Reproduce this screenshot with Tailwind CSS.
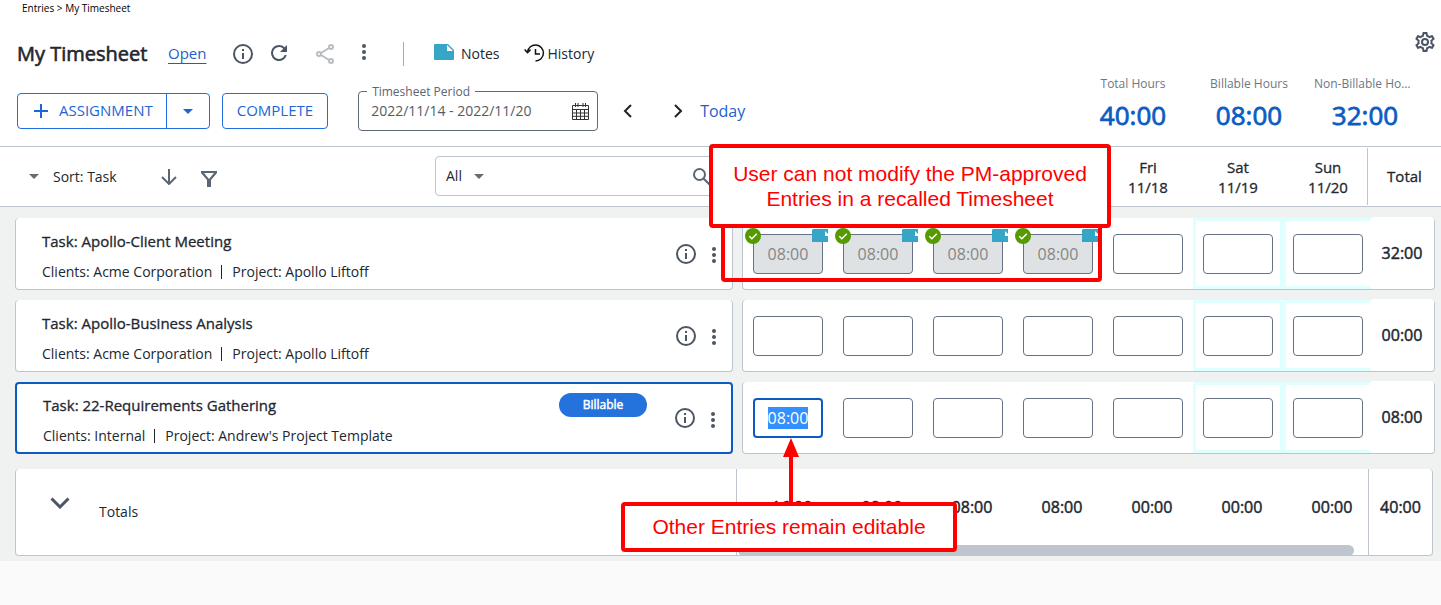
<!DOCTYPE html>
<html lang="en">

<head>
  <meta charset="UTF-8" />
  <meta name="viewport" content="width=device-width, initial-scale=1.0"/>
  <title>My Timesheet</title>
  <script src="https://cdn.jsdelivr.net/npm/@tailwindcss/browser@4"></script>
</head>

<body class="bg-[#fafafa] font-['Open_Sans','Noto_Sans',sans-serif] text-sm text-[#22272f] min-h-screen">

  <!-- Icons -->
  <svg class="hidden">
    <symbol id="i-info" viewBox="0 0 20 20">
      <circle cx="10" cy="10" r="9" fill="none" stroke="currentColor" stroke-width="2"/>
      <path d="M9 5h2v2H9zM9 9h2v6H9z" fill="currentColor"/>
    </symbol>
    <symbol id="i-dots" viewBox="0 0 4 16">
      <g fill="currentColor"><circle cx="2" cy="2" r="2"/><circle cx="2" cy="8" r="2"/><circle cx="2" cy="14" r="2"/></g>
    </symbol>
    <symbol id="i-caret" viewBox="0 0 10 5"><path d="M0 0h10L5 5z" fill="currentColor"/></symbol>
    <symbol id="i-note" viewBox="0 0 20 16"><path d="M1 0h13l6 6v9a1 1 0 0 1-1 1H1a1 1 0 0 1-1-1V1a1 1 0 0 1 1-1z" fill="#37a5c6"/><path d="M13 1v6h6z" fill="#fff"/></symbol>
    <symbol id="i-note-sm" viewBox="0 0 16 13"><path d="M1 0h15v13H0V1z" fill="#37a5c6"/><path d="M13 2l3 3v2h-3z" fill="#fff"/></symbol>
    <symbol id="i-check" viewBox="0 0 16 16"><circle cx="8" cy="8" r="8" fill="#549a00"/><path d="M4.3 8.2l2.5 2.5 5-5" fill="none" stroke="#fff" stroke-width="1.5"/></symbol>
  </svg>

  <div class="relative">
    <header class="bg-white">
      <nav class="pl-[22px] text-[10px] leading-4 text-black">Entries &gt; My Timesheet</nav>
      <div class="flex justify-between">
        <div class="pt-[14px] pl-[17px]">
          <div class="flex items-center h-12">
            <h1 class="w-[151px] text-xl [-webkit-text-stroke:0.03em] whitespace-nowrap">My Timesheet</h1>
            <a href="#" class="w-[65px] text-[15px] text-[#1d5fc9] underline underline-offset-4">Open</a>
            <button aria-label="Info" class="text-[#4b5563]"><svg class="size-5"><use href="#i-info"/></svg></button>
            <button aria-label="Refresh" class="ml-[14px] pb-[2px] text-[#4b5563]">
              <svg class="size-6" viewBox="0 0 24 24" fill="currentColor"><path d="M17.65 6.35A7.96 7.96 0 0 0 12 4a8 8 0 1 0 7.73 10h-2.08A6 6 0 1 1 12 6c1.66 0 3.14.69 4.22 1.78L13 11h7V4z"/></svg>
            </button>
            <button aria-label="Share" class="ml-[25px] text-[#b9bdc3]">
              <svg class="w-[18px] h-5" viewBox="0 0 18 20" fill="none" stroke="currentColor" stroke-width="2"><circle cx="3" cy="10" r="2"/><circle cx="15" cy="3" r="2"/><circle cx="15" cy="17" r="2"/><path d="M5 9l8-5M5 11l8 5"/></svg>
            </button>
            <button aria-label="More" class="ml-7 pb-1 text-[#4b5563]"><svg class="w-1 h-4"><use href="#i-dots"/></svg></button>
            <span class="ml-[37px] mr-[30px] w-px h-6 bg-[#a3abb8]"></span>
            <button class="flex items-center gap-[7px]"><svg class="mb-1 w-5 h-4"><use href="#i-note"/></svg>Notes</button>
            <button class="flex items-center gap-[3px] ml-[24px]">
              <svg class="mb-[2px] w-[21px] h-5" viewBox="0 0 21 20" fill="none" stroke="#111" stroke-width="1.5"><path d="M3.500 9A8 8 0 1 1 11.500 18M11.500 6v5H16"/><path d="M.6 6.600L3.500 9.600l3-3"/></svg>
              History
            </button>
          </div>
          <div class="flex items-center h-10 mt-[13px] mb-[15px]">
            <div class="flex h-9 border border-[#1f6fde] rounded text-[15px] text-[#1d66d6]">
              <button class="flex items-center gap-[10px] pl-[15px] pr-[13px] border-r border-[#1f6fde]">
                <svg class="size-4" viewBox="0 0 16 16" stroke="currentColor" stroke-width="2"><path d="M8 1v14M1 8h14"/></svg>
                ASSIGNMENT
              </button>
              <button aria-label="More assignment options" class="px-4"><svg class="w-[10px] h-[5px]"><use href="#i-caret"/></svg></button>
            </div>
            <button class="h-9 ml-3 px-[14px] border border-[#1f6fde] rounded text-[15px] text-[#1d66d6]">COMPLETE</button>
            <div class="relative flex items-center w-60 h-10 ml-[30px] pl-3 pr-2 border border-[#5f6b7a] rounded">
              <label for="period" class="absolute -top-2 left-2 px-[5px] bg-white text-xs leading-4 text-[#5b6472] whitespace-nowrap">Timesheet Period</label>
              <input id="period" type="text" value="2022/11/14 - 2022/11/20" class="min-w-0 flex-1 text-[#555b66] outline-none" />
              <svg class="w-[17px] h-[17px]" viewBox="0 0 17 17" fill="none" stroke="#333" stroke-width="1"><path d="M.5 2.500h16v14H.5zM.5 6.500h16M.5 10h16M.5 13.300h16M4.500 6.500v10M8.500 6.500v10M12.500 6.500v10"/><path d="M3.500 0v4M6 0v4M11 0v4M13.500 0v4"/></svg>
            </div>
            <button aria-label="Previous period" class="ml-[25px]"><svg class="w-[9px] h-[14px]" viewBox="0 0 9 14" fill="none" stroke="#222" stroke-width="2"><path d="M8 1L2 7l6 6"/></svg></button>
            <button aria-label="Next period" class="ml-[42px]"><svg class="w-[9px] h-[14px]" viewBox="0 0 9 14" fill="none" stroke="#222" stroke-width="2"><path d="M1 1l6 6-6 6"/></svg></button>
            <button class="ml-[17px] text-base text-[#1d5fc9]">Today</button>
          </div>
        </div>

        <div class="flex flex-col items-end pt-4">
          <button aria-label="Settings" class="mr-[6px] text-[#4b5563]">
            <svg class="size-5" viewBox="2 2 20 20" fill="currentColor"><path d="M19.43 12.98c.04-.32.07-.64.07-.98s-.03-.66-.07-.98l2.11-1.65a.5.5 0 0 0 .12-.64l-2-3.46a.5.5 0 0 0-.61-.22l-2.49 1a7.3 7.3 0 0 0-1.69-.98l-.38-2.65A.49.49 0 0 0 14 2h-4a.49.49 0 0 0-.49.42l-.38 2.65c-.61.25-1.17.59-1.69.98l-2.49-1a.5.5 0 0 0-.61.22l-2 3.46a.5.5 0 0 0 .12.64l2.11 1.65a7.9 7.9 0 0 0 0 1.96l-2.11 1.65a.5.5 0 0 0-.12.64l2 3.46c.12.22.38.3.61.22l2.49-1c.52.4 1.08.73 1.69.98l.38 2.65c.03.24.24.42.49.42h4c.25 0 .46-.18.49-.42l.38-2.65a7.3 7.3 0 0 0 1.69-.98l2.49 1c.23.08.49 0 .61-.22l2-3.46a.5.5 0 0 0-.12-.64zm-1.98-1.71a5.3 5.3 0 0 1 0 1.46l-.14 1.13 1.9 1.5-.7 1.21-2.24-.9-.93.71c-.36.27-.72.48-1.09.63l-1.06.43-.34 2.39h-1.7l-.34-2.39-1.06-.43a5 5 0 0 1-1.07-.62l-.95-.72-2.24.9-.7-1.21 1.9-1.5-.14-1.13a5.400 5.400 0 0 1 0-1.46l.14-1.13-1.9-1.5.7-1.21 2.24.9.93-.71c.36-.27.72-.48 1.090-.63l1.060-.43.34-2.390h1.700l.34 2.390 1.060.43c.38.160.73.360 1.070.62l.95.720 2.240-.9.700 1.210-1.900 1.500zM12 8a4 4 0 1 0 0 8 4 4 0 0 0 0-8zm0 6a2 2 0 1 1 0-4 2 2 0 0 1 0 4z"/></svg>
          </button>
          <dl class="grid grid-cols-3 w-[348px] mt-6 mr-[18px] text-center">
            <div class="px-[7px]"><dt class="text-xs leading-4 text-[#6b7785] truncate">Total Hours</dt><dd class="mt-[7px] text-[26px] leading-8 [-webkit-text-stroke:0.03em] text-[#0b5cc2]">40:00</dd></div>
            <div class="px-[7px]"><dt class="text-xs leading-4 text-[#6b7785] truncate">Billable Hours</dt><dd class="mt-[7px] text-[26px] leading-8 [-webkit-text-stroke:0.03em] text-[#0b5cc2]">08:00</dd></div>
            <div class="px-[7px]"><dt class="text-xs leading-4 text-[#6b7785] truncate">Non-Billable Hours</dt><dd class="mt-[7px] text-[26px] leading-8 [-webkit-text-stroke:0.03em] text-[#0b5cc2]">32:00</dd></div>
          </dl>
        </div>
      </div>
    </header>

    <!-- Sort, search and day headings -->
    <div class="flex h-[61px] bg-white border-y border-[#bfc5cf]">
      <div class="flex flex-1 items-center pl-[29px]">
        <button class="flex items-center gap-[14px]"><svg class="w-[10px] h-[5px] text-[#6b6b6b]"><use href="#i-caret"/></svg>Sort: Task</button>
        <button aria-label="Sort direction" class="ml-[44px] text-[#5b6675]"><svg class="size-4" viewBox="0 0 16 16" fill="none" stroke="currentColor" stroke-width="2"><path d="M8 0v15M1 8l7 7 7-7"/></svg></button>
        <button aria-label="Filter" class="ml-6 mt-1 text-[#5b6675]"><svg class="size-4" viewBox="0 0 16 16" fill="currentColor"><path d="M0 0h16v2l-6 7v7H6V9L0 2zM3 2l5 6 5-6z" fill-rule="evenodd"/></svg></button>
        <div class="flex items-center w-[290px] h-10 ml-auto mr-[18px] mb-px px-[10px] border border-[#bfc5cf] rounded">
          <button class="flex items-center gap-[12px]">All<svg class="w-[10px] h-[5px] text-[#6b6b6b]"><use href="#i-caret"/></svg></button>
          <input type="search" aria-label="Search tasks" class="min-w-0 flex-1 px-2 outline-none" />
          <svg class="w-[17px] h-[17px] mr-1 text-[#5b6675]" viewBox="0 0 17 17" fill="none" stroke="currentColor" stroke-width="2"><circle cx="6.500" cy="6.500" r="5.500"/><path d="M10.500 10.500l6 6"/></svg>
        </div>
      </div>
      <div id="day-head" class="grid grid-cols-7 items-center w-[630px] shrink-0 text-center text-[15px] leading-5 [-webkit-text-stroke:0.02em]"></div>
      <div class="relative flex items-center justify-center w-[74px] -ml-[6px] my-px border-l border-[#bfc5cf] text-[15px] [-webkit-text-stroke:0.02em]">Total</div>
    </div>

    <main class="bg-[#f0f2f1] pt-[11px] pb-[5px]">
      <div id="rows" class="flex flex-col gap-[10px] pl-[15px] pr-[6px]"></div>

      <!-- Totals -->
      <div class="relative flex h-[87px] mt-[15px] ml-[15px] mr-2 bg-white border border-t-0 border-[#bfc5cf] rounded">
        <div class="flex flex-1 items-center pl-[34px]">
          <button aria-label="Expand totals" class="mb-[18px] text-[#4b5563]"><svg class="w-5 h-3" viewBox="0 0 20 12" fill="none" stroke="currentColor" stroke-width="3"><path d="M1.500 1.500L10 10l8.500-8.500"/></svg></button>
          <span class="ml-[29px]">Totals</span>
        </div>
        <div id="day-totals" class="grid grid-cols-7 items-center w-[641px] shrink-0 pl-[10px] pb-[10px] border-l border-[#bfc5cf] text-base [-webkit-text-stroke:0.03em] text-center"></div>
        <div class="relative flex items-center justify-center w-16 -ml-[9px] pb-[10px] border-l border-[#bfc5cf] text-base [-webkit-text-stroke:0.03em]">40:00</div>
        <div class="absolute right-[78px] -bottom-px w-[616px] h-[11px] rounded-full bg-[#bfc5cf]"></div>
      </div>
    </main>

    <!-- Callouts -->
    <div class="absolute top-[222px] right-[339px] w-[381px] h-[60px] border-4 border-[#ff0000] rounded"></div>
    <p class="absolute top-[144px] right-[330px] w-[402px] h-[84px] pt-[13px] border-4 border-[#ff0000] rounded bg-white text-center font-['Liberation_Sans',Arial,sans-serif] text-[21px] leading-[25px] text-[#ff0000]">User can not modify the PM-approved<br/>Entries in a recalled Timesheet</p>
    <svg class="absolute top-[438px] right-[642px] w-4 h-[66px]" viewBox="0 0 16 66" fill="#f00"><path d="M8 0l8 19h-6v47H6V19H0z"/></svg>
    <p class="absolute top-[502px] right-[484px] w-[336px] h-[50px] pt-2 border-4 border-[#ff0000] rounded bg-white text-center font-['Liberation_Sans',Arial,sans-serif] text-[21px] leading-[25px] text-[#ff0000]">Other Entries remain editable</p>
  </div>

  <script>
    const days = [["Mon", "11/14"], ["Tue", "11/15"], ["Wed", "11/16"], ["Thu", "11/17"], ["Fri", "11/18"], ["Sat", "11/19"], ["Sun", "11/20"]];
    const dayTotals = ["16:00", "08:00", "08:00", "08:00", "00:00", "00:00", "00:00"];
    const tasks = [
      { name: "Apollo-Client Meeting", client: "Acme Corporation", project: "Apollo Liftoff", total: "32:00", approved: 4 },
      { name: "Apollo-Business Analysis", client: "Acme Corporation", project: "Apollo Liftoff", total: "00:00", approved: 0 },
      { name: "22-Requirements Gathering", client: "Internal", project: "Andrew's Project Template", total: "08:00", approved: 0, active: true }
    ];

    function dayCell(task, i) {
      const label = `${task.name} ${days[i][0]} ${days[i][1]}`;
      const weekend = i > 4 ? "border-[3px] border-[#e0ffff] pt-[13px]" : "pt-4";
      let field = `<input aria-label="${label}" class="w-[70px] h-10 border border-[#677384] rounded bg-white text-base text-center" />`;
      if (i < task.approved) {
        field = `<input aria-label="${label}" value="08:00" disabled class="w-[70px] h-10 border border-[#677384] rounded bg-[#dfe2e5] text-base text-center text-[#868686]" />
          <svg class="absolute top-[10px] left-[2px] size-4"><use href="#i-check"/></svg>
          <svg class="absolute top-[11px] right-[5px] w-4 h-[13px]"><use href="#i-note-sm"/></svg>`;
      }
      if (task.active && i === 0) {
        field = `<input id="active-entry" aria-label="${label}" value="08:00" class="w-[70px] h-10 border-2 border-[#0b5cc2] rounded bg-white text-base leading-[22px] text-center outline-none caret-transparent selection:bg-[#3390ff] selection:text-white" />`;
      }
      return `<div class="relative flex items-start justify-center ${weekend}">${field}</div>`;
    }

    document.getElementById("day-head").innerHTML = days.map(d => `<div>${d[0]}<br/>${d[1]}</div>`).join("");
    document.getElementById("day-totals").innerHTML = dayTotals.map(t => `<div>${t}</div>`).join("");
    document.getElementById("rows").innerHTML = tasks.map(t => `
      <section class="flex gap-[9px] h-[72px]">
        <div class="flex flex-1 items-center pl-[26px] pr-4 bg-white rounded ${t.active ? "border-2 border-[#0b5cc2]" : "border border-t-0 border-[#bfc5cf]"}">
          <div class="flex-1 pt-[5px]">
            <h2 class="text-[15px] leading-5 [-webkit-text-stroke:0.02em]">Task: ${t.name}</h2>
            <p class="flex items-center mt-[11px] leading-5">Clients: ${t.client}<span class="w-px h-[14px] ml-[9px] mr-[10px] bg-[#22272f]"></span>Project: ${t.project}</p>
          </div>
          ${t.active ? `<span class="mb-[26px] mr-7 w-[88px] rounded-full bg-[#2472dc] text-white text-xs leading-6 [-webkit-text-stroke:0.04em] text-center">Billable</span>` : ""}
          <button aria-label="Task info" class="text-[#4b5563]"><svg class="size-5"><use href="#i-info"/></svg></button>
          <button aria-label="Task menu" class="ml-4 mt-[3px] text-[#4b5563]"><svg class="w-1 h-4"><use href="#i-dots"/></svg></button>
        </div>
        <div class="flex w-[693px] shrink-0 bg-white border border-t-0 border-[#bfc5cf] rounded">
          <div class="grid grid-cols-7 w-[630px] shrink-0">${days.map((d, i) => dayCell(t, i)).join("")}</div>
          <div class="relative flex items-center justify-center w-16 -ml-[3px] -mt-px bg-white rounded text-base [-webkit-text-stroke:0.03em]">${t.total}</div>
        </div>
      </section>`).join("");

    const entry = document.getElementById("active-entry");
    entry.focus();
    entry.select();
  </script>
</body>

</html>
